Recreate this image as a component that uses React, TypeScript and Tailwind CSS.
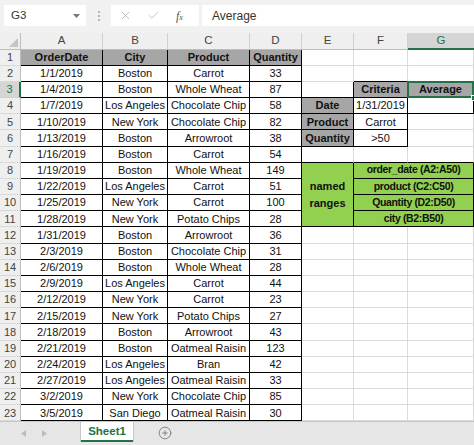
import React from 'react';
import { X, Check, CirclePlus } from 'lucide-react';

const rows: string[][] = [
  ['OrderDate', 'City', 'Product', 'Quantity'],
  ['1/1/2019', 'Boston', 'Carrot', '33'],
  ['1/4/2019', 'Boston', 'Whole Wheat', '87'],
  ['1/7/2019', 'Los Angeles', 'Chocolate Chip', '58'],
  ['1/10/2019', 'New York', 'Chocolate Chip', '82'],
  ['1/13/2019', 'Boston', 'Arrowroot', '38'],
  ['1/16/2019', 'Boston', 'Carrot', '54'],
  ['1/19/2019', 'Boston', 'Whole Wheat', '149'],
  ['1/22/2019', 'Los Angeles', 'Carrot', '51'],
  ['1/25/2019', 'New York', 'Carrot', '100'],
  ['1/28/2019', 'New York', 'Potato Chips', '28'],
  ['1/31/2019', 'Boston', 'Arrowroot', '36'],
  ['2/3/2019', 'Boston', 'Chocolate Chip', '31'],
  ['2/6/2019', 'Boston', 'Whole Wheat', '28'],
  ['2/9/2019', 'Los Angeles', 'Carrot', '44'],
  ['2/12/2019', 'New York', 'Carrot', '23'],
  ['2/15/2019', 'New York', 'Potato Chips', '27'],
  ['2/18/2019', 'Boston', 'Arrowroot', '43'],
  ['2/21/2019', 'Boston', 'Oatmeal Raisin', '123'],
  ['2/24/2019', 'Los Angeles', 'Bran', '42'],
  ['2/27/2019', 'Los Angeles', 'Oatmeal Raisin', '33'],
  ['3/2/2019', 'New York', 'Chocolate Chip', '85'],
  ['3/5/2019', 'San Diego', 'Oatmeal Raisin', '30'],
];

const criteria: Record<number, [string, string]> = {
  4: ['Date', '1/31/2019'],
  5: ['Product', 'Carrot'],
  6: ['Quantity', '>50'],
};

const ranges: Record<number, string> = {
  8: 'order_date (A2:A50)',
  9: 'product (C2:C50)',
  10: 'Quantity (D2:D50)',
  11: 'city (B2:B50)',
};

const base = 'flex items-center justify-center overflow-hidden whitespace-nowrap';
const plain = `${base} border-r border-b border-[#dadada]`;
const boxed = `${base} border-r border-b border-black`;
const gray = 'bg-[#a6a6a6] font-bold';
const green = 'bg-[#92d050] font-bold';

function FormulaBar() {
  return (
    <div className="h-[33px] bg-[#f1f1f1] flex items-center pl-[4px] pb-[2px]">
      <div className="w-[82px] h-[21px] bg-white flex items-center justify-between pl-[7px] pr-[6px] text-[#333] text-[11.5px]">
        <span>G3</span>
        <svg width="7" height="4" viewBox="0 0 7 4"><path d="M0 0h7L3.5 4z" fill="#777" /></svg>
      </div>
      <div className="w-[25px] flex flex-col items-center gap-[2px]">
        <span className="w-[2px] h-[2px] bg-[#b5b5b5]" />
        <span className="w-[2px] h-[2px] bg-[#b5b5b5]" />
        <span className="w-[2px] h-[2px] bg-[#b5b5b5]" />
      </div>
      <div className="w-[88px] h-[21px] bg-white flex items-center pl-[8px]">
        <X size={13} strokeWidth={1.3} className="text-[#a8a8a8]" />
        <Check size={13} strokeWidth={1.3} className="text-[#a8a8a8] ml-[15px]" />
        <span className="ml-[16px] text-[#555] text-[12px] italic font-['Liberation_Serif',serif]">
          f<span className="text-[8px]">x</span>
        </span>
      </div>
      <div className="ml-[3px] flex-1 h-[21px] bg-white flex items-center pl-[10px] text-[#333] text-[12px]">Average</div>
    </div>
  );
}

function Grid() {
  const cells: React.ReactNode[] = [];
  const heads = ['A', 'B', 'C', 'D', 'E', 'F', 'G'];

  cells.push(
    <div key="corner" className="bg-[#efefef] border-r border-b border-[#bdbdbd] flex items-end justify-end p-[2px]">
      <svg width="9" height="9" viewBox="0 0 9 9"><path d="M9 0v9H0z" fill="#c4c4c4" /></svg>
    </div>
  );
  heads.forEach((h) =>
    cells.push(
      h === 'G' ? (
        <div key={h} className="bg-[#d5d5d5] border-b-2 border-[#217346] flex items-center justify-center text-[#217346] text-[11.5px]">{h}</div>
      ) : (
        <div key={h} className="bg-[#efefef] border-r border-b border-[#d0d0d0] border-b-[#bdbdbd] flex items-center justify-center text-[#444] text-[11.5px]">{h}</div>
      )
    )
  );

  for (let r = 1; r <= 23; r++) {
    cells.push(
      r === 3 ? (
        <div key={`h${r}`} className="bg-[#d5d5d5] border-r-2 border-[#217346] border-b border-b-[#d0d0d0] flex items-center justify-center text-[#217346] text-[11px]">{r}</div>
      ) : (
        <div key={`h${r}`} className="bg-[#efefef] border-r border-b border-[#d8d8d8] border-r-[#bdbdbd] flex items-center justify-center text-[#444] text-[11px]">{r}</div>
      )
    );
    rows[r - 1].forEach((v, c) =>
      cells.push(
        <div key={`${r}-${c}`} className={`${boxed} ${r === 1 ? gray : ''}`}>{v}</div>
      )
    );

    // column E
    if (r === 3) cells.push(<div key={`E${r}`} className={boxed} />);
    else if (criteria[r]) cells.push(<div key={`E${r}`} className={`${boxed} ${gray}`}>{criteria[r][0]}</div>);
    else if (r === 7) cells.push(<div key={`E${r}`} className={`${plain} border-b-black`} />);
    else if (r === 8)
      cells.push(
        <div key={`E${r}`} className={`${boxed} ${green} row-span-4 flex-col leading-[17px]`}>
          <span>named</span>
          <span>ranges</span>
        </div>
      );
    else if (r < 9 || r > 11) cells.push(<div key={`E${r}`} className={plain} />);

    // columns F and G
    if (ranges[r]) {
      cells.push(
        <div key={`F${r}`} className={`${boxed} ${green} col-span-2 text-[10.5px] tracking-[-0.35px]`}>{ranges[r]}</div>
      );
      continue;
    }
    if (r === 2 || r === 7) {
      cells.push(<div key={`F${r}`} className={`${plain} border-b-black`} />);
      cells.push(<div key={`G${r}`} className={`${plain} border-b-black`} />);
    } else if (r === 3) {
      cells.push(<div key={`F${r}`} className={`${boxed} ${gray}`}>Criteria</div>);
      cells.push(
        <div key={`G${r}`} className={`${boxed} ${gray} relative overflow-visible`}>
          Average
          <span className="absolute -left-[1px] -top-[1px] -right-[1px] -bottom-[1px] border-2 border-[#217346]" />
          <span className="absolute -right-[4px] -bottom-[4px] w-[6px] h-[6px] bg-[#217346] border border-white" />
        </div>
      );
    } else if (criteria[r]) {
      cells.push(<div key={`F${r}`} className={boxed}>{criteria[r][1]}</div>);
      cells.push(<div key={`G${r}`} className={r === 4 ? boxed : plain} />);
    } else {
      cells.push(<div key={`F${r}`} className={plain} />);
      cells.push(<div key={`G${r}`} className={plain} />);
    }
  }

  return (
    <div className="grid grid-cols-[21px_82px_65px_82px_52px_52px_54px_66px] grid-rows-[16.5px_repeat(23,16.18px)] text-[11px] text-[#111]">
      {cells}
    </div>
  );
}

function TabBar() {
  return (
    <div className="flex-1 bg-[#e6e6e6] border-t border-[#c8c8c8] flex items-start">
      <div className="w-[81px] flex items-center pt-[8px] pl-[21px] gap-[16px]">
        <svg width="5" height="7" viewBox="0 0 5 7"><path d="M5 0v7L0 3.5z" fill="#bdbdbd" /></svg>
        <svg width="5" height="7" viewBox="0 0 5 7"><path d="M0 0v7l5-3.5z" fill="#bdbdbd" /></svg>
      </div>
      <div className="w-[52px] h-[20px] bg-white border-b-2 border-[#217346] flex items-center justify-center text-[#217346] font-bold text-[11.5px] shadow-[1px_0_0_#c8c8c8,-1px_0_0_#c8c8c8]">
        Sheet1
      </div>
      <div className="ml-[25px] pt-[4px]">
        <CirclePlus size={14} strokeWidth={1.3} className="text-[#6a6a6a]" />
      </div>
    </div>
  );
}

export default function App() {
  return (
    <div className="w-[474px] h-[445px] overflow-hidden bg-white flex flex-col font-['Liberation_Sans',Arial,sans-serif]">
      <FormulaBar />
      <Grid />
      <TabBar />
    </div>
  );
}
